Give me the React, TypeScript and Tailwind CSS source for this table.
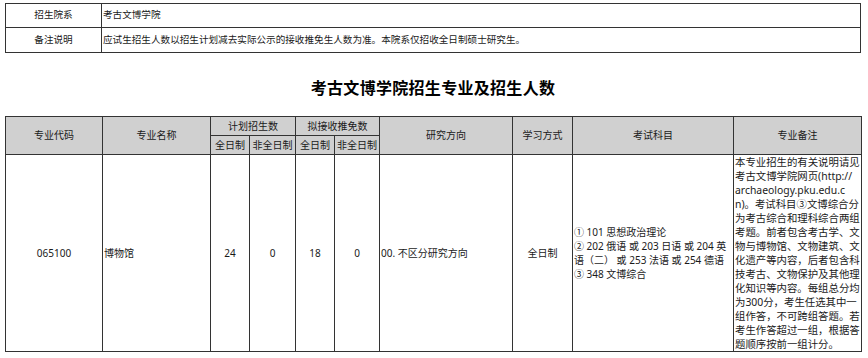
const font = { fontFamily: '"Noto Sans", "Noto Sans CJK SC", sans-serif' };

const noteLines = [
  "本专业招生的有关说明请见",
  "考古文博学院网页(http://",
  "archaeology.pku.edu.c",
  "n)。考试科目③文博综合分",
  "为考古综合和理科综合两组",
  "考题。前者包含考古学、文",
  "物与博物馆、文物建筑、文",
  "化遗产等内容，后者包含科",
  "技考古、文物保护及其他理",
  "化知识等内容。每组总分均",
  "为300分，考生任选其中一",
  "组作答，不可跨组答题。若",
  "考生作答超过一组，根据答",
  "题顺序按前一组计分。",
];

const examLines = [
  "① 101 思想政治理论",
  "② 202 俄语 或 203 日语 或 204 英",
  "语（二） 或 253 法语 或 254 德语",
  "③ 348 文博综合",
];

const App = () => {
  const th = "border border-[#333] bg-[#d0d0d0] text-center font-normal p-0";
  const td = "border border-[#333] p-0";

  return (
    <div className="w-[868px] h-[358px] bg-white text-[#1a1a1a] text-[10px] pt-[3px] pl-[5px]" style={font}>
      {/* 院系信息 */}
      <table className="w-[856px] table-fixed border-collapse text-[9.6px]">
        <colgroup>
          <col className="w-[96px]" />
          <col />
        </colgroup>
        <tbody>
          <tr className="h-[24px]">
            <td className={`${td} text-center`}>招生院系</td>
            <td className={`${td} pl-[1px]`}>考古文博学院</td>
          </tr>
          <tr className="h-[25px]">
            <td className={`${td} text-center`}>备注说明</td>
            <td className={`${td} pl-[1px]`}>应试生招生人数以招生计划减去实际公示的接收推免生人数为准。本院系仅招收全日制硕士研究生。</td>
          </tr>
        </tbody>
      </table>

      <div className="w-[856px] h-[63px] flex items-center justify-center">
        <h1 className="text-[16px] font-bold text-black tracking-[0.3px] pt-[6px]">考古文博学院招生专业及招生人数</h1>
      </div>

      {/* 专业表 */}
      <table className="w-[856px] table-fixed border-collapse">
        <colgroup>
          <col className="w-[97px]" />
          <col className="w-[108px]" />
          <col className="w-[39px]" />
          <col className="w-[46px]" />
          <col className="w-[39px]" />
          <col className="w-[45px]" />
          <col className="w-[133px]" />
          <col className="w-[60px]" />
          <col className="w-[161px]" />
          <col className="w-[128px]" />
        </colgroup>
        <thead>
          <tr className="h-[19px]">
            <th rowSpan={2} className={th}>专业代码</th>
            <th rowSpan={2} className={th}>专业名称</th>
            <th colSpan={2} className={th}>计划招生数</th>
            <th colSpan={2} className={th}>拟接收推免数</th>
            <th rowSpan={2} className={th}>研究方向</th>
            <th rowSpan={2} className={th}>学习方式</th>
            <th rowSpan={2} className={th}>考试科目</th>
            <th rowSpan={2} className={th}>专业备注</th>
          </tr>
          <tr className="h-[19px]">
            <th className={th}>全日制</th>
            <th className={th}>非全日制</th>
            <th className={th}>全日制</th>
            <th className={th}>非全日制</th>
          </tr>
        </thead>
        <tbody>
          <tr className="h-[197px]">
            <td className={`${td} text-center`}>065100</td>
            <td className={`${td} pl-[1px]`}>博物馆</td>
            <td className={`${td} text-center`}>24</td>
            <td className={`${td} text-center`}>0</td>
            <td className={`${td} text-center`}>18</td>
            <td className={`${td} text-center`}>0</td>
            <td className={`${td} pl-[1px]`}>00. 不区分研究方向</td>
            <td className={`${td} text-center`}>全日制</td>
            <td className={`${td} pl-[1px] leading-[14px] whitespace-nowrap`}>
              {examLines.map((l) => (
                <div key={l}>{l}</div>
              ))}
            </td>
            <td className={`${td} pl-[1px] text-[10.4px] leading-[14px] whitespace-nowrap align-top`}>
              {noteLines.map((l) => (
                <div key={l}>{l}</div>
              ))}
            </td>
          </tr>
        </tbody>
      </table>
    </div>
  );
};

export default App;
